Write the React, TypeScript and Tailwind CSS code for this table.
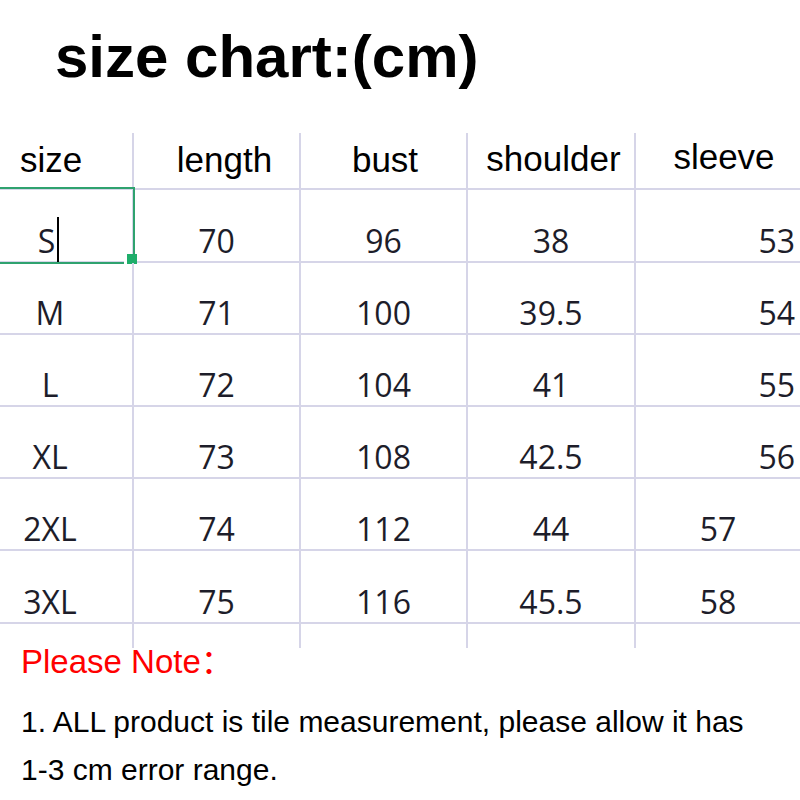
const headers = [
  { label: "size", cls: "justify-start pl-[20px] pb-[11px]" },
  { label: "length", cls: "justify-center pl-[16px] pb-[11px]" },
  { label: "bust", cls: "justify-center pl-[3px] pb-[11px]" },
  { label: "shoulder", cls: "justify-center pl-[5px] pb-[12px]" },
  { label: "sleeve", cls: "justify-center pl-[12px] pb-[14px]" },
];

const rows = [
  ["S", "70", "96", "38", "53"],
  ["M", "71", "100", "39.5", "54"],
  ["L", "72", "104", "41", "55"],
  ["XL", "73", "108", "42.5", "56"],
  ["2XL", "74", "112", "44", "57"],
  ["3XL", "75", "116", "45.5", "58"],
];

const colWidths = ["w-[134px]", "w-[167px]", "w-[167px]", "w-[168px]", "w-[164px]"];
const line = "border-[#d6d5e8]";

function DataCell({ value, col, row }: { value: string; col: number; row: number }) {
  const right = col === 4 && row < 4;
  let align = "justify-center";
  if (col === 0) align = row === 0 ? "justify-center pr-[39px]" : "justify-center pr-[32px]";
  if (right) align = "justify-end pr-[5px]";
  return (
    <div
      className={`relative flex items-end pb-[4px] ${colWidths[col]} ${align} ${
        col < 4 ? `border-r-2 ${line}` : ""
      }`}
    >
      <span className="text-[32px] leading-none text-[#1d1d2a]">{value}</span>
      {col === 0 && row === 0 && (
        <>
          <div className="absolute -left-[2px] -top-[3px] w-[137px] h-[77px] border-2 border-[#2fa26f]" />
          <div className="absolute left-[124px] top-[64px] w-[13px] h-[10px] border-l-[3px] border-white bg-[#1fae6b]" />
          <div className="absolute left-[57px] top-[27px] w-[2px] h-[45px] bg-black" />
        </>
      )}
    </div>
  );
}

export default function App() {
  return (
    <div className="w-[800px] h-[800px] bg-white overflow-hidden">
      <h1
        className="h-[133px] pl-[55px] pt-[27px] text-[60px] leading-[60px] font-bold text-black"
        style={{ fontFamily: '"Liberation Sans", Arial, sans-serif' }}
      >
        size chart:(cm)
      </h1>

      <div style={{ fontFamily: '"Open Sans", "Noto Sans", sans-serif' }}>
        <div
          className={`flex h-[57px] border-b-2 ${line}`}
          style={{ fontFamily: '"Liberation Sans", Arial, sans-serif' }}
        >
          {headers.map((h, i) => (
            <div
              key={h.label}
              className={`flex items-end ${colWidths[i]} ${h.cls} ${i < 4 ? `border-r-2 ${line}` : ""}`}
            >
              <span className="text-[35px] leading-none text-black">{h.label}</span>
            </div>
          ))}
        </div>

        {rows.map((r, ri) => (
          <div
            key={r[0]}
            className={`flex border-b-2 ${line} ${ri === 0 || ri === 5 ? "h-[73px]" : "h-[72px]"}`}
          >
            {r.map((v, ci) => (
              <DataCell key={ci} value={v} col={ci} row={ri} />
            ))}
          </div>
        ))}

        <div className="flex h-[24px]">
          {colWidths.map((w, i) => (
            <div key={i} className={`${w} ${i < 4 ? `border-r-2 ${line}` : ""}`} />
          ))}
        </div>
      </div>

      <div
        className="pl-[21px] w-[770px]"
        style={{ fontFamily: '"Liberation Sans", Arial, "Noto Sans CJK SC", sans-serif' }}
      >
        <p className="-mt-[3px] text-[33px] leading-[33px] text-[#ff0000]">Please Note：</p>
        <p className="mt-[20px] text-[30px] leading-[48px] text-black">
          1. ALL product is tile measurement, please allow it has 1-3 cm error range.
        </p>
      </div>
    </div>
  );
}
